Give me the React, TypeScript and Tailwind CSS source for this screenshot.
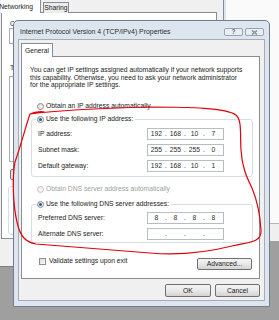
import React from "react";

function Radio({ checked, disabled }: { checked?: boolean; disabled?: boolean }) {
  return (
    <span
      className={
        "w-[7px] h-[7px] rounded-full border flex items-center justify-center shrink-0 " +
        (disabled
          ? "border-[#c4c4c4] bg-[#f3f3f3]"
          : "border-[#8a8a8a] bg-linear-to-br from-[#d8d8d8] to-[#ffffff]")
      }
    >
      {checked && <span className="w-[3px] h-[3px] rounded-full bg-[#1d5a94]" />}
    </span>
  );
}

function IpBox({ parts }: { parts: string[] }) {
  return (
    <div className="w-[77px] h-[12px] bg-white border border-[#b8bcc4] flex items-center pl-[1px] text-[#2a2a2a]">
      {parts.map((p, i) => (
        <React.Fragment key={i}>
          {i > 0 && <span className="w-[4px] text-center">.</span>}
          <span className="w-[15px] text-center">{p}</span>
        </React.Fragment>
      ))}
    </div>
  );
}

function Row({ label, parts }: { label: string; parts: string[] }) {
  return (
    <div className="flex items-center h-[12px] pl-[6px]">
      <span className="w-[109px]">{label}</span>
      <IpBox parts={parts} />
    </div>
  );
}

function WinButton({ children, w }: { children: React.ReactNode; w: string }) {
  return (
    <div
      className={
        w +
        " h-full rounded-[2px] border border-[#707070] bg-linear-to-b from-[#f4f4f4] via-[#e9e9e9] to-[#d3d3d3] flex items-center justify-center text-[#1a1a1a]"
      }
    >
      {children}
    </div>
  );
}

function BgWindow() {
  return (
    <div className="absolute left-0 top-0 w-[226px] h-[267px] flex border-b border-[#7d7d7d]">
      <div className="flex-1 bg-[#f0f0f0] flex flex-col pl-[1px] pr-[6px] pb-[27px]">
        <div className="flex items-end h-[13px] -mb-px relative z-10">
          <div className="h-[13px] w-[40px] bg-white border-r border-[#898c95] flex items-center justify-end pr-[7px] whitespace-nowrap">
            Networking
          </div>
          <div className="ml-[2px] h-[11px] w-[26px] bg-[#ececec] border border-b-0 border-[#898c95] flex items-center justify-center">
            Sharing
          </div>
        </div>
        <div className="flex-1 bg-white border border-[#898c95] flex flex-col pl-[7px] pr-[4px]">
          <div className="mt-[7px] h-[8px] w-[4px] ml-[1px] overflow-hidden whitespace-nowrap leading-[8px]">
            Connect using:
          </div>
          <div className="h-[16px] border border-[#a5acb5] bg-white" />
          <div className="mt-[20px] h-[8px] w-[4px] ml-[1px] overflow-hidden whitespace-nowrap leading-[8px]">
            This connection uses the following items:
          </div>
          <div className="mt-[4px] h-[86px] border border-[#a5acb5] bg-white" />
          <div className="mt-[7px] ml-[1px] w-[50px] h-[11px] rounded-[2px] border border-[#707070] bg-[#e6e6e6]" />
          <div className="mt-[6px] -ml-[1px] h-[49px] border border-[#d5dfe5] rounded-[3px]" />
        </div>
      </div>
      <div className="w-[3px] bg-[#dce5ee] border-l border-[#7f8c99]" />
    </div>
  );
}

function Dialog() {
  return (
    <div className="absolute left-[13px] top-[20px] w-[257px] h-[287px] rounded-t-[5px] border border-[#6f7d8c] bg-[#dde6ef] flex flex-col px-[4px] pb-[5px]">
      <div className="h-[18px] shrink-0 flex items-center pt-[4px] pl-[2px] pr-[1px] text-[6.9px] text-[#2b2b2b] whitespace-nowrap">
        <span>Internet Protocol Version 4 (TCP/IPv4) Properties</span>
        <div className="ml-auto flex gap-[2px] h-[8px]">
          <div className="w-[19px] h-[8px] rounded-[2px] border border-[#95a4b6] bg-[#e9eef4] flex items-center justify-center text-[6.5px] font-bold text-[#6b6b6b]">
            ?
          </div>
          <div className="w-[19px] h-[8px] rounded-[2px] border border-[#95a4b6] bg-[#e9eef4] flex items-center justify-center">
            <svg width="7" height="5" viewBox="0 0 7 5">
              <path d="M1 0.5 L6 4.5 M6 0.5 L1 4.5" stroke="#6e6e6e" strokeWidth="1.4" />
              <path d="M1 0.5 L6 4.5 M6 0.5 L1 4.5" stroke="#e9eef4" strokeWidth="0.4" />
            </svg>
          </div>
        </div>
      </div>
      <div className="flex-1 bg-[#f0f0f0] border border-[#a3adb8] flex flex-col pl-[2px] pr-[4px] pt-[3px]">
        <div className="relative z-10 -mb-px w-[32px] h-[14px] bg-white border border-b-0 border-[#898c95] flex items-center justify-center">
          General
        </div>
        <div className="h-[223px] bg-white border border-[#898c95] flex flex-col">
          <p className="mt-[9px] ml-[8px] h-[23px] leading-[7.5px] whitespace-nowrap">
            You can get IP settings assigned automatically if your network supports
            <br />
            this capability. Otherwise, you need to ask your network administrator
            <br />
            for the appropriate IP settings.
          </p>
          <div className="mt-[13px] ml-[15px] h-[8px] flex items-center gap-[2px]">
            <Radio />
            <span>Obtain an IP address automatically</span>
          </div>
          <fieldset className="mt-[5px] ml-[9px] w-[222px] border border-[#d5dfe5] rounded-[3px] pb-[4px] flex flex-col gap-[4px]">
            <legend className="ml-[4px] px-[1px] pr-[2px] h-[8px]">
              <span className="flex items-center gap-[2px] h-[8px]">
                <Radio checked />
                <span>Use the following IP address:</span>
              </span>
            </legend>
            <div className="mt-[5px]">
              <Row label="IP address:" parts={["192", "168", "10", "7"]} />
            </div>
            <Row label="Subnet mask:" parts={["255", "255", "255", "0"]} />
            <Row label="Default gateway:" parts={["192", "168", "10", "1"]} />
          </fieldset>
          <div className="mt-[8px] ml-[15px] h-[8px] flex items-center gap-[2px] text-[#a0a0a0]">
            <Radio disabled />
            <span>Obtain DNS server address automatically</span>
          </div>
          <fieldset className="mt-[7px] ml-[9px] w-[222px] border border-[#d5dfe5] rounded-[3px] pb-[2px] flex flex-col gap-[4px]">
            <legend className="ml-[4px] px-[1px] pr-[2px] h-[8px]">
              <span className="flex items-center gap-[2px] h-[8px]">
                <Radio checked />
                <span>Use the following DNS server addresses:</span>
              </span>
            </legend>
            <div className="mt-[4px]">
              <Row label="Preferred DNS server:" parts={["8", "8", "8", "8"]} />
            </div>
            <Row label="Alternate DNS server:" parts={["", "", "", ""]} />
          </fieldset>
          <div className="mt-[14px] flex items-start pr-[7px]">
            <div className="ml-[17px] h-[8px] flex items-center gap-[3px]">
              <span className="w-[7px] h-[7px] border border-[#8f8f8f] bg-linear-to-br from-[#dcdcdc] to-[#fbfbfb]" />
              <span>Validate settings upon exit</span>
            </div>
            <div className="ml-auto mt-[1px] h-[12px]">
              <WinButton w="w-[55px]">Advanced...</WinButton>
            </div>
          </div>
        </div>
        <div className="mt-[5px] h-[13px] flex justify-end gap-[4px]">
          <WinButton w="w-[46px]">OK</WinButton>
          <WinButton w="w-[45px]">Cancel</WinButton>
        </div>
      </div>
    </div>
  );
}

export default function App() {
  return (
    <div className="relative w-[279px] h-[320px] overflow-hidden bg-[#9f9f9f] font-['Liberation_Sans',Arial,sans-serif] text-[6.75px] leading-[8px] text-[#222222]">
      <div className="absolute left-[226px] top-0 w-[53px] h-[241px] flex flex-col">
        <div className="h-[224px] bg-[#fafafa] border-b border-[#b5b5b5]" />
        <div className="flex-1 bg-[#efefef]" />
      </div>
      <BgWindow />
      <Dialog />
      <svg
        className="absolute left-0 top-0 pointer-events-none"
        width="279"
        height="320"
        viewBox="0 0 279 320"
      >
        <path
          d="M 30 114 C 27 122, 21 145, 15 162 C 12 178, 13 205, 17 222 C 20 236, 25 242, 36 244 C 70 247, 110 250, 150 253 C 185 256, 212 251, 232 246 C 248 242, 262 243, 261 230 C 260 214, 257 200, 252 188 C 246 176, 242 166, 241 150 C 240 134, 242 120, 236 115 C 226 108, 190 107, 150 107 C 110 108, 60 110, 30 114 C 36 112, 40 111, 44 112"
          fill="none"
          stroke="#e3000b"
          strokeWidth="1.2"
          strokeLinecap="round"
        />
      </svg>
    </div>
  );
}
